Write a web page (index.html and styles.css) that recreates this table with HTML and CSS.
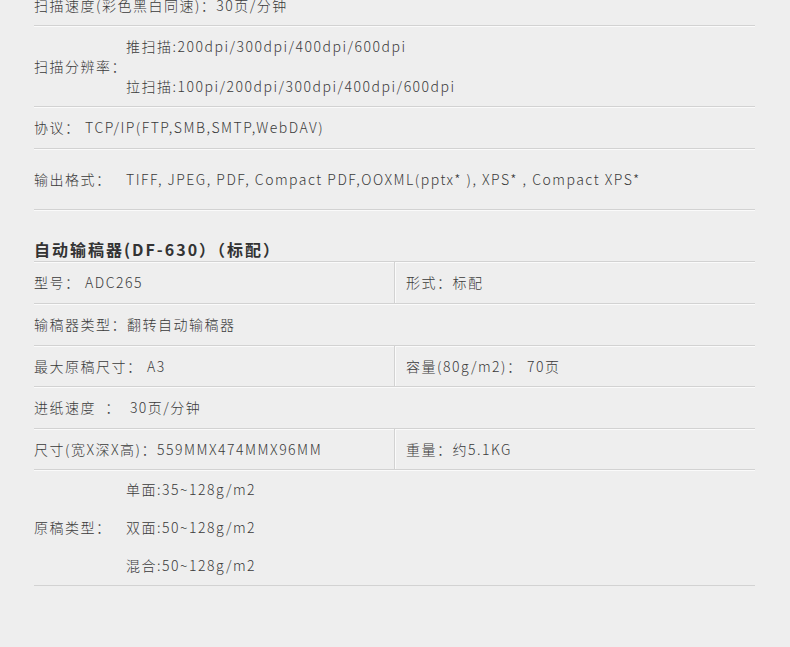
FILE: index.html
```html
<!DOCTYPE html>
<html lang="zh-CN">
<head>
    <meta charset="UTF-8">
    <meta name="viewport" content="width=device-width, initial-scale=1.0">
    <title>产品参数</title>
    <link rel="stylesheet" href="styles.css">
</head>
<body>
    <div class="specs">
        <!-- 扫描 -->
        <div class="row row-first">扫描速度(彩色黑白同速)：30页/分钟</div>
        <div class="row row-multi">
            <div class="label">扫描分辨率：</div>
            <div class="values">
                <div>推扫描:200dpi/300dpi/400dpi/600dpi</div>
                <div>拉扫描:100pi/200dpi/300dpi/400dpi/600dpi</div>
            </div>
        </div>
        <div class="row">协议： TCP/IP(FTP,SMB,SMTP,WebDAV)</div>
        <div class="row row-tall">
            <div class="label">输出格式：</div>
            <div class="values">TIFF, JPEG, PDF, Compact PDF,OOXML(pptx* ), XPS* , Compact XPS*</div>
        </div>

        <!-- 自动输稿器 -->
        <h2 class="section-title">自动输稿器(DF-630）（标配）</h2>
        <div class="row row-split">
            <div class="cell">型号： ADC265</div>
            <div class="cell">形式：标配</div>
        </div>
        <div class="row">输稿器类型：翻转自动输稿器</div>
        <div class="row row-split row-short">
            <div class="cell">最大原稿尺寸： A3</div>
            <div class="cell">容量(80g/m2)： 70页</div>
        </div>
        <div class="row">进纸速度&nbsp;&nbsp;：&nbsp;&nbsp;30页/分钟</div>
        <div class="row row-split row-short">
            <div class="cell">尺寸(宽X深X高)：559MMX474MMX96MM</div>
            <div class="cell">重量：约5.1KG</div>
        </div>
        <div class="row row-multi row-paper">
            <div class="label">原稿类型：</div>
            <div class="values">
                <div>单面:35~128g/m2</div>
                <div>双面:50~128g/m2</div>
                <div>混合:50~128g/m2</div>
            </div>
        </div>
    </div>
</body>
</html>
```

FILE: styles.css
```css
body {
    margin: 0;
    padding: 0;
    background-color: #eeeeee;
    font-family: "Noto Sans CJK SC", "Noto Sans", sans-serif;
    font-weight: 300;
    color: #3a3a3a;
    font-size: 14px;
    letter-spacing: 1.5px;
}

.specs {
    width: 721px;
    margin: -15px 0 0 34px;
}

.row {
    display: flex;
    align-items: center;
    line-height: 41px;
    border-bottom: 1px solid #d2d2d2;
    box-shadow: 0 1px 0 #fafafa;
}

.row-first {
    line-height: 40px;
}

.row-multi {
    line-height: 40px;
}

.row-tall {
    line-height: 60px;
}

.row-short {
    line-height: 40px;
}

.row-paper {
    line-height: 38px;
    padding-bottom: 1px;
}

.label {
    width: 92px;
    flex-shrink: 0;
    white-space: nowrap;
}

.values {
    flex: 1;
}

.section-title {
    margin: 0;
    padding-top: 28px;
    font-size: 16px;
    font-weight: bold;
    line-height: 23px;
    letter-spacing: 2px;
    color: #333;
    border-bottom: 1px solid #d2d2d2;
    box-shadow: 0 1px 0 #fafafa;
}

.row-split {
    align-items: stretch;
}

.row-split .cell {
    flex: 0 0 360px;
}

.row-split .cell + .cell {
    flex: 1;
    border-left: 1px solid #d2d2d2;
    box-shadow: inset 1px 0 0 #fafafa;
    padding-left: 11px;
}
```
